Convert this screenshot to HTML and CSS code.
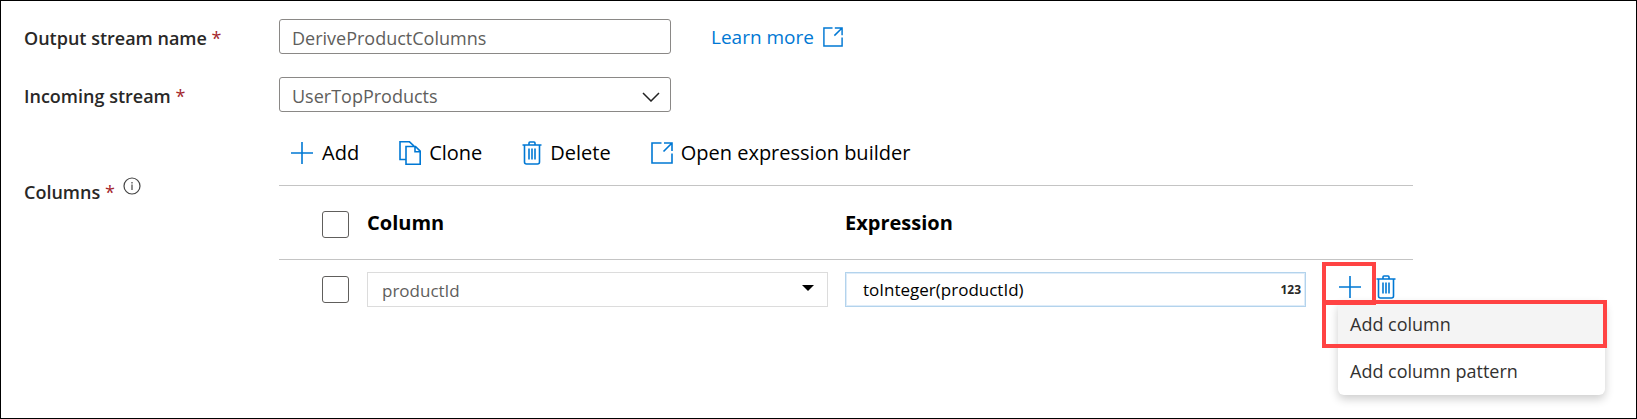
FILE: index.html
```html
<!DOCTYPE html>
<html lang="en">
<head>
<meta charset="utf-8">
<meta name="viewport" content="width=device-width, initial-scale=1">
<title>Derived column settings</title>
<link rel="stylesheet" href="styles.css">
</head>
<body>
<svg class="symbols" aria-hidden="true">
  <symbol id="plus" viewBox="0 0 24 24"><path d="M12 1v22M1 12h22"/></symbol>
  <symbol id="clone" viewBox="0 0 22 24"><path d="M7 18.500H1V.8h9.500L15 5M7 5.500h9.500l4.700 4.700v13H7zM16 5.500v5.200h5.200"/></symbol>
  <symbol id="trash" viewBox="0 0 20 24"><path d="M.5 4h19M7 4V2q0-1 1-1h4q1 0 1 1v2M2.500 4v17q0 2 2 2h11q2 0 2-2V4M7 7.500v11M10 7.500v11M13 7.500v11"/></symbol>
  <symbol id="open" viewBox="0 0 22 22"><path d="M10.500 1H1v20h20v-9.500M13 1h8v8M21 1l-8.500 8.500"/></symbol>
</svg>
<main class="settings">
  <label class="label" for="output">Output stream name <span class="required">*</span></label>
  <div class="field-line">
    <input class="field" id="output" type="text" value="DeriveProductColumns">
    <a class="learn" href="#">Learn more <svg class="icon icon-link"><use href="#open"/></svg></a>
  </div>

  <label class="label" for="incoming">Incoming stream <span class="required">*</span></label>
  <div class="field-line">
    <div class="select-box">
      <select class="field" id="incoming"><option>UserTopProducts</option></select>
      <svg class="chevron" viewBox="0 0 18 10"><path d="M1 1l8 8 8-8"/></svg>
    </div>
  </div>

  <div class="label label-columns" id="columns-label">
    <span>Columns <span class="required">*</span></span>
    <svg class="info" viewBox="0 0 18 18"><circle cx="9" cy="9" r="8"/><path d="M9 7.500v5.500M9 5v1.500"/></svg>
  </div>
  <section class="columns" aria-labelledby="columns-label">
    <div class="toolbar">
      <button class="tool" type="button"><svg class="icon icon-plus"><use href="#plus"/></svg>Add</button>
      <button class="tool" type="button"><svg class="icon icon-clone"><use href="#clone"/></svg>Clone</button>
      <button class="tool" type="button"><svg class="icon icon-trash"><use href="#trash"/></svg>Delete</button>
      <button class="tool" type="button"><svg class="icon icon-open"><use href="#open"/></svg>Open expression builder</button>
    </div>
    <table class="grid">
      <colgroup><col class="col-check"><col><col><col class="col-actions"></colgroup>
      <thead>
        <tr>
          <th class="check-cell"><input class="check" type="checkbox" aria-label="Select all columns"></th>
          <th scope="col">Column</th>
          <th scope="col">Expression</th>
          <td></td>
        </tr>
      </thead>
      <tbody>
        <tr>
          <td class="check-cell"><input class="check" type="checkbox" aria-label="Select productId"></td>
          <td class="value-cell">
            <div class="select-box select-box-wide">
              <select class="field field-column" aria-label="Column"><option>productId</option></select>
              <svg class="caret" viewBox="0 0 12 6"><path d="M0 0h12L6 6z"/></svg>
            </div>
          </td>
          <td class="value-cell">
            <div class="expression">
              <input class="expression-input" type="text" value="toInteger(productId)" aria-label="Expression">
              <span class="type">123</span>
            </div>
          </td>
          <td class="action-cell">
            <div class="actions">
              <button class="action action-add" type="button" aria-label="Add"><svg class="icon icon-plus"><use href="#plus"/></svg></button>
              <button class="action" type="button" aria-label="Delete"><svg class="icon icon-trash"><use href="#trash"/></svg></button>
              <div class="menu" role="menu">
                <button class="menu-item menu-item-active" type="button" role="menuitem">Add column</button>
                <button class="menu-item" type="button" role="menuitem">Add column pattern</button>
              </div>
            </div>
          </td>
        </tr>
      </tbody>
    </table>
  </section>
</main>
</body>
</html>
```
FILE: styles.css
```css
*, *::before, *::after { box-sizing: border-box; }

body {
  margin: 0;
  background: #fff;
  color: #000;
  font-family: "Open Sans", "Noto Sans", sans-serif;
  font-size: 18px;
  line-height: 24px;
}

button, input, select {
  margin: 0;
  font: inherit;
  color: inherit;
}

button {
  padding: 0;
  border: 0;
  background: none;
}

.symbols { display: none; }

.settings {
  display: grid;
  grid-template-columns: 255px 1fr;
  align-content: start;
  row-gap: 23px;
  min-height: 100vh;
  padding: 18px 23px;
  border: 1px solid #000;
}

.label {
  align-self: center;
  padding-top: 2px;
  color: #292827;
  font-weight: 600;
}

.required {
  color: #a4262c;
  font-weight: 400;
}

.label-columns {
  display: flex;
  align-self: start;
  gap: 8px;
  padding-top: 42px;
  line-height: 30px;
}

.info {
  width: 18px;
  height: 18px;
  fill: none;
  stroke: #444;
  stroke-width: 1.2;
}

.field-line {
  display: flex;
  align-items: center;
  gap: 40px;
}

.field {
  width: 392px;
  height: 35px;
  padding: 2px 12px 0;
  border: 1px solid #8a8886;
  border-radius: 3px;
  background: #fff;
  color: #605e5c;
  appearance: none;
}

.learn {
  display: flex;
  align-items: center;
  gap: 9px;
  color: #0078d4;
  font-size: 19px;
  text-decoration: none;
}

.icon {
  flex: none;
  fill: none;
  stroke: #0078d4;
  stroke-width: 1.6;
}

.icon-link { width: 20px; height: 20px; }
.icon-plus { width: 24px; height: 24px; }
.icon-clone { width: 22px; height: 24px; }
.icon-trash { width: 20px; height: 24px; }
.icon-open { width: 22px; height: 22px; }

.select-box {
  display: flex;
  position: relative;
}

.select-box-wide { width: 100%; }

.chevron {
  position: absolute;
  top: 15px;
  right: 11px;
  width: 18px;
  height: 10px;
  fill: none;
  stroke: #222;
  stroke-width: 1.5;
  pointer-events: none;
}

.caret {
  position: absolute;
  top: 13px;
  right: 14px;
  width: 12px;
  height: 6px;
  pointer-events: none;
}

.columns { max-width: 1134px; }

.toolbar {
  display: flex;
  align-items: center;
  gap: 40px;
  height: 36px;
  margin-bottom: 14px;
  padding-left: 11px;
}

.tool {
  display: flex;
  align-items: center;
  gap: 8px;
  font-size: 20px;
}

.grid {
  width: 100%;
  border-collapse: collapse;
  table-layout: fixed;
}

.col-check { width: 88px; }
.col-actions { width: 90px; }

.grid thead tr {
  height: 74px;
  border-top: 1px solid #c4c4c4;
  border-bottom: 1px solid #c4c4c4;
}

.grid th, .grid td {
  padding: 0;
  text-align: left;
}

.grid th { font-size: 20px; font-weight: 700; }

.grid .check-cell { padding-left: 43px; }
.grid th.check-cell { padding-top: 4px; }

.check {
  display: block;
  width: 27px;
  height: 27px;
  border: 1px solid #605e5c;
  border-radius: 3px;
  background: #fff;
  appearance: none;
}

.grid .value-cell { padding: 12px 17px 12px 0; }
.grid .action-cell { padding: 12px 0 18px; }

.field-column {
  width: 100%;
  padding-left: 14px;
  border-color: #dcdcdc;
  border-radius: 0;
  font-size: 17px;
}

.expression {
  display: flex;
  align-items: center;
  height: 35px;
  padding: 0 4px 0 17px;
  border: 1px solid #b3d3ec;
  box-shadow: inset 0 0 0 1px #deecf9;
}

.expression-input {
  flex: 1;
  min-width: 0;
  padding: 0;
  border: 0;
  outline: 0;
  background: none;
  font-size: 17px;
}

.type {
  color: #292827;
  font-size: 12px;
  font-weight: 700;
}

.actions {
  display: flex;
  position: relative;
  align-items: center;
}

.action { display: flex; }

.action-add {
  position: relative;
  width: 53px;
  padding-left: 15px;
}

.action-add::before {
  content: "";
  position: absolute;
  z-index: 2;
  top: -13px;
  left: -1px;
  width: 54px;
  height: 43px;
  border: 4px solid #ff4343;
}

.menu {
  display: flex;
  position: absolute;
  z-index: 1;
  top: 26px;
  left: 15px;
  flex-direction: column;
  width: 267px;
  border-radius: 6px;
  background: #fff;
  box-shadow: 0 4px 10px rgba(0, 0, 0, 0.2);
}

.menu-item {
  position: relative;
  height: 47px;
  padding: 0 12px;
  color: #323130;
  text-align: left;
}

.menu-item-active { background: #f4f4f4; }

.menu-item-active::after {
  content: "";
  position: absolute;
  inset: -1px -2px 0 -16px;
  border: 4px solid #ff4343;
}
```
